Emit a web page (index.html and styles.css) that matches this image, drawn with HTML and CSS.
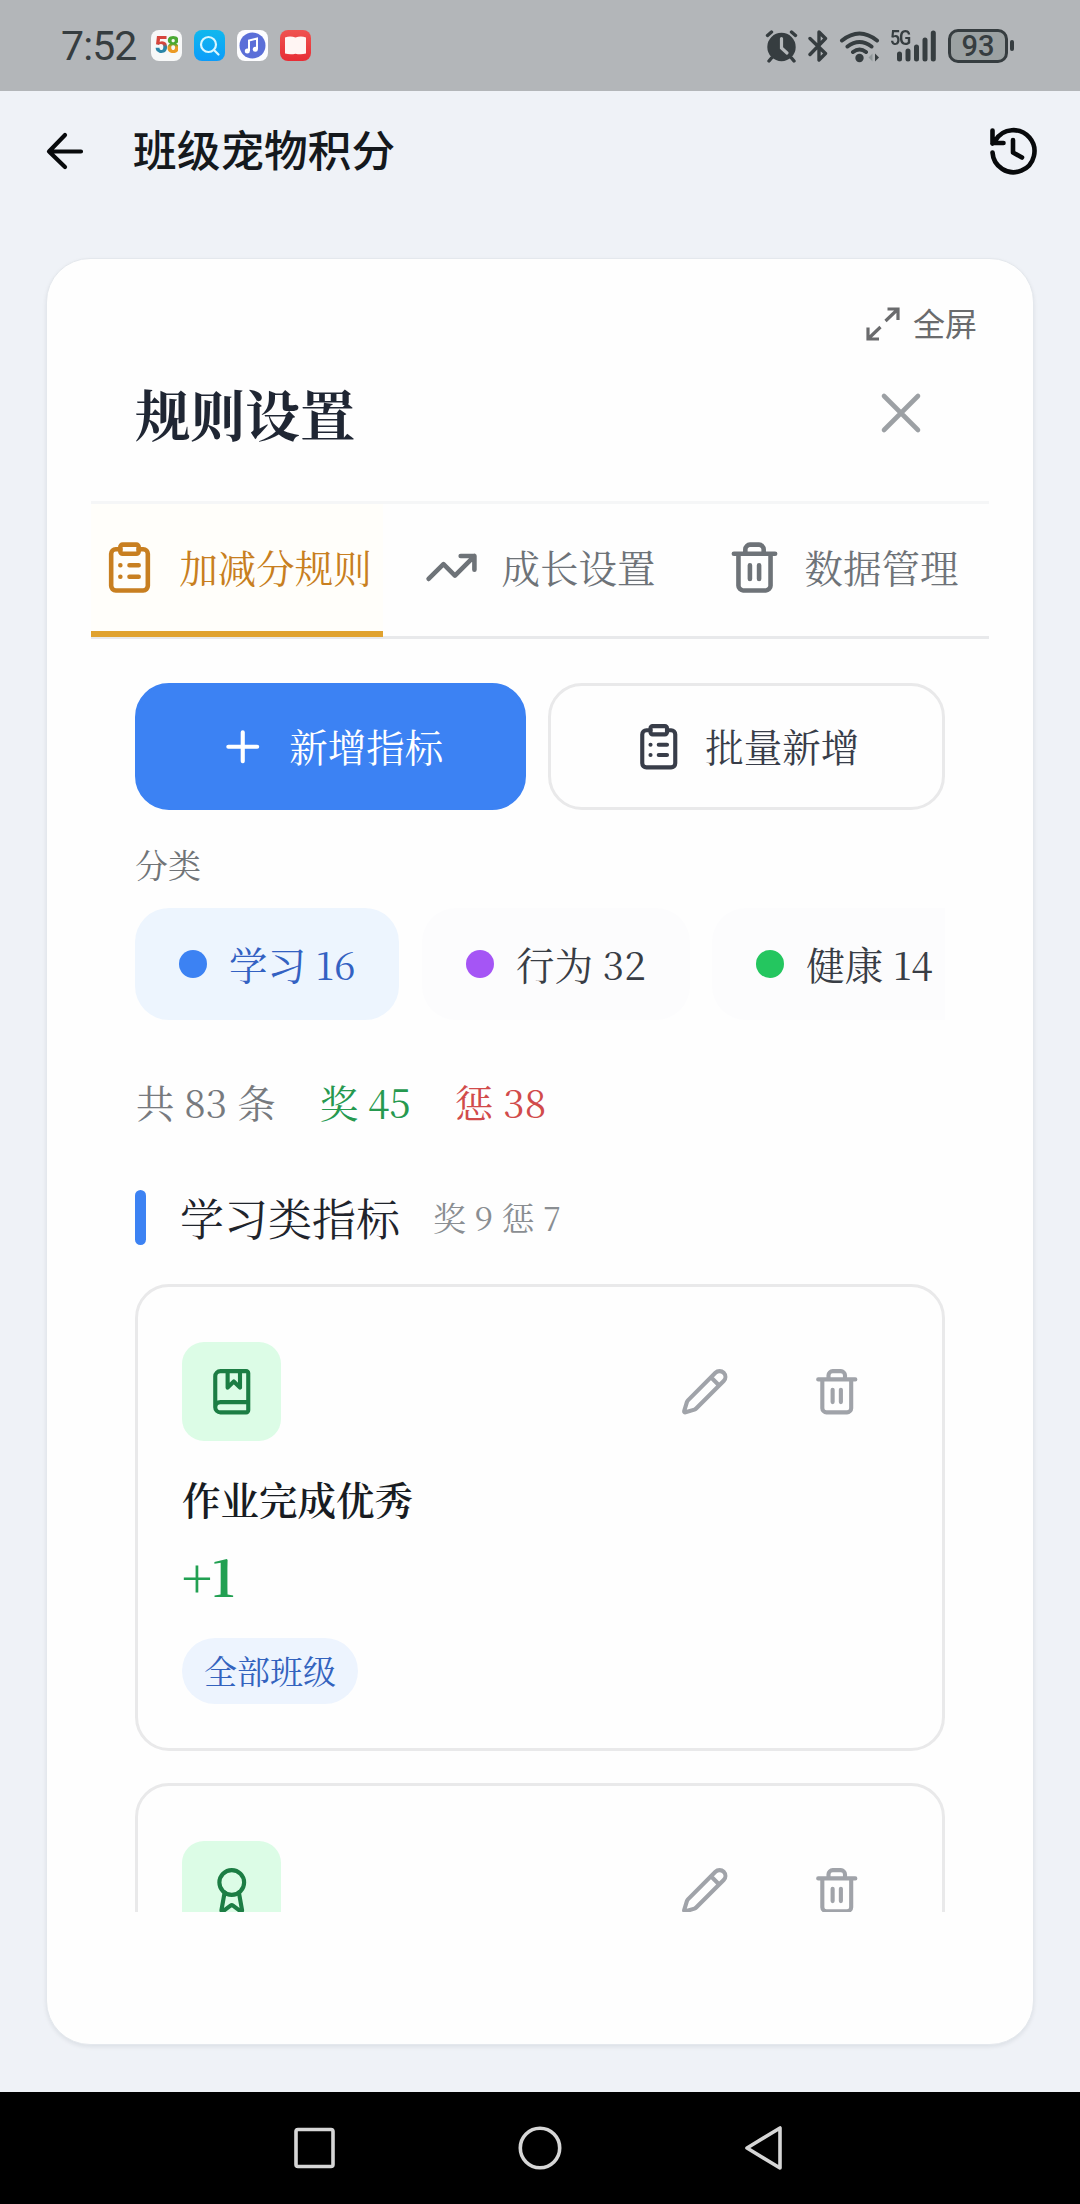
FILE: index.html
```html
<!DOCTYPE html>
<html lang="zh-CN">
<head>
<meta charset="utf-8">
<title>班级宠物积分</title>
<link rel="stylesheet" href="styles.css">
</head>
<body>
<svg class="defs" width="0" height="0" aria-hidden="true">
  <symbol id="i-clipboard" viewBox="0 0 24 24"><rect x="8" y="2" width="8" height="4" rx="1"/><path d="M16 4h2a2 2 0 0 1 2 2v14a2 2 0 0 1-2 2H6a2 2 0 0 1-2-2V6a2 2 0 0 1 2-2h2M12 11h4M12 16h4M8 11h.01M8 16h.01"/></symbol>
  <symbol id="i-trend" viewBox="0 0 24 24"><path d="M22 7l-8.5 8.500-5-5L2 17M16 7h6v6"/></symbol>
  <symbol id="i-trash" viewBox="0 0 24 24"><path d="M3 6h18M19 6v14c0 1-1 2-2 2H7c-1 0-2-1-2-2V6M8 6V4c0-1 1-2 2-2h4c1 0 2 1 2 2v2M10 11v6M14 11v6"/></symbol>
  <symbol id="i-pencil" viewBox="0 0 24 24"><path d="M21.174 6.812a1 1 0 0 0-3.986-3.987L3.842 16.174a2 2 0 0 0-.5.83l-1.321 4.352a.5.5 0 0 0 .623.622l4.353-1.320a2 2 0 0 0 .83-.497zM15 5l4 4"/></symbol>
  <symbol id="i-plus" viewBox="0 0 24 24"><path d="M5 12h14M12 5v14"/></symbol>
  <symbol id="i-book" viewBox="0 0 24 24"><path d="M10 2v8l3-3 3 3V2M4 19.500v-15A2.500 2.500 0 0 1 6.500 2H19a1 1 0 0 1 1 1v18a1 1 0 0 1-1 1H6.500a1 1 0 0 1 0-5H20"/></symbol>
  <symbol id="i-award" viewBox="0 0 24 24"><circle cx="12" cy="8" r="6"/><path d="m15.477 12.890 1.515 8.526a.5.5 0 0 1-.81.47l-3.580-2.687a1 1 0 0 0-1.197 0l-3.586 2.686a.5.5 0 0 1-.81-.469l1.514-8.526"/></symbol>
</svg>

<header class="status">
  <div class="status-left">
    <span class="clock">7:52</span>
    <span class="app app-58"><b class="c5">5</b><b class="c8">8</b></span>
    <span class="app app-search"><svg viewBox="0 0 31 31" width="31" height="31"><circle cx="14.500" cy="14.500" r="7.500"/><path d="M20 20l4.500 4.500"/></svg></span>
    <span class="app app-music"><svg viewBox="0 0 31 31" width="31" height="31"><circle cx="15.500" cy="15.500" r="13" fill="#5b6fd8"/><path d="M12 21V10.500l8-2V19" fill="none" stroke="#fff" stroke-width="2"/><circle cx="10.300" cy="21" r="2.500" fill="#fff"/><circle cx="18.300" cy="19.300" r="2.500" fill="#fff"/></svg></span>
    <span class="app app-red"><svg viewBox="0 0 31 31" width="31" height="31"><path d="M5 7.500q5.200-2 10.500 0 5.300-2 10.500 0v16q-5 1.500-10.500.3-5.500 1.200-10.500-.3z" fill="#fff5f3"/></svg></span>
  </div>
  <div class="status-right">
    <svg class="alarm" width="33" height="34" viewBox="0 0 33 34"><circle cx="16.500" cy="18" r="14.200" fill="#363d40"/><path d="M2.500 6.500L6.500 3M30.500 6.500L26.500 3M6.500 29l-2.500 3M26.500 29l2.500 3" stroke="#363d40" stroke-width="3.400" stroke-linecap="round"/><path d="M16.500 9.500V19l5.500 5" stroke="#b4b8ba" stroke-width="3.200" fill="none" stroke-linecap="round"/></svg>
    <svg class="bt" width="20" height="34" viewBox="0 0 20 34" fill="none" stroke="#363d40" stroke-width="3.400" stroke-linejoin="round" stroke-linecap="round"><path d="M2 9.500l15.500 15L11 31V3l6.500 6.500L2 25.500"/></svg>
    <svg class="wifi" width="42" height="34" viewBox="0 0 42 34" fill="none" stroke="#363d40" stroke-width="4" stroke-linecap="round"><path d="M3 11.500q17.500-14 35 0M8.500 17.500q12-9 24 0M14 23q6.500-5 13 0"/><circle cx="20.500" cy="29" r="4.200" fill="#363d40" stroke="none"/><path d="M36 24.500v8l4-4z" fill="#363d40" stroke="none"/><path d="M33.500 24.500v8l-4-4z" fill="#90979a" stroke="none"/></svg>
    <span class="net"><i class="g5">5G</i><svg width="46" height="34" viewBox="0 0 46 34" stroke="#363d40" stroke-width="5" stroke-linecap="round"><path d="M9.500 25v5M18 22v8M26.500 18v12M35 11v19M43.300 4v26"/></svg></span>
    <span class="battery">93</span><span class="nub"></span>
  </div>
</header>

<div class="appbar">
  <svg class="back" width="40" height="40" viewBox="0 0 40 40"><path d="M36 20.500H4M20 4L4 20.500 20 36"/></svg>
  <h1 class="app-title">班级宠物积分</h1>
  <svg class="history" width="50" height="50" viewBox="0 0 50 50"><path d="M4.500 26.500a21 21 0 1 0 3-12.200L4.500 17.500M4.500 4.500V17h11M25 14v12.500l9 5"/></svg>
</div>

<main class="panel">
  <div class="fullscreen"><svg width="34" height="34" viewBox="0 0 34 34"><path d="M19.500 14L31.500 2.500M21.500 2h10.500v11M14.500 20L2.500 31.500M2 20.500V32h11"/></svg><span>全屏</span></div>
  <section class="dialog">
    <div class="dialog-head">
      <h2>规则设置</h2>
      <svg class="close" width="42" height="42" viewBox="0 0 42 42"><path d="M4 4l34 34M38 4L4 38"/></svg>
    </div>
    <nav class="tabs">
      <div class="tab active"><svg class="icon i20"><use href="#i-clipboard"/></svg><span>加减分规则</span></div>
      <div class="tab"><svg class="icon i20"><use href="#i-trend"/></svg><span>成长设置</span></div>
      <div class="tab"><svg class="icon i20"><use href="#i-trash"/></svg><span>数据管理</span></div>
    </nav>
    <div class="scroll">
      <div class="actions">
        <div class="btn primary"><svg class="icon i18"><use href="#i-plus"/></svg><span>新增指标</span></div>
        <div class="btn"><svg class="icon i18"><use href="#i-clipboard"/></svg><span>批量新增</span></div>
      </div>
      <div class="label">分类</div>
      <div class="chips">
        <div class="chip on"><i class="dot blue"></i><span>学习 16</span></div>
        <div class="chip"><i class="dot purple"></i><span>行为 32</span></div>
        <div class="chip"><i class="dot green"></i><span>健康 14</span></div>
      </div>
      <div class="stats"><span>共 83 条</span><span class="good">奖 45</span><span class="bad">惩 38</span></div>
      <div class="group"><i class="bar"></i><h3>学习类指标</h3><span class="sub">奖 9 惩 7</span></div>
      <article class="rule">
        <div class="rule-top">
          <span class="tile"><svg class="icon i18"><use href="#i-book"/></svg></span>
          <div class="ops"><span class="op"><svg class="icon i18"><use href="#i-pencil"/></svg></span><span class="op"><svg class="icon i18"><use href="#i-trash"/></svg></span></div>
        </div>
        <div class="name">作业完成优秀</div>
        <div class="points">+1</div>
        <div class="pill">全部班级</div>
      </article>
      <article class="rule">
        <div class="rule-top">
          <span class="tile"><svg class="icon i18"><use href="#i-award"/></svg></span>
          <div class="ops"><span class="op"><svg class="icon i18"><use href="#i-pencil"/></svg></span><span class="op"><svg class="icon i18"><use href="#i-trash"/></svg></span></div>
        </div>
      </article>
    </div>
  </section>
</main>

<footer class="navbar">
  <svg width="44" height="48" viewBox="0 0 44 48"><rect x="3" y="5.500" width="37" height="37" rx="2"/></svg>
  <svg width="48" height="48" viewBox="0 0 48 48"><circle cx="24" cy="24" r="19.700"/></svg>
  <svg width="44" height="48" viewBox="0 0 44 48"><path d="M37 4v40L4 24z"/></svg>
</footer>
</body>
</html>
```
FILE: styles.css
```css
* { box-sizing: border-box; }
body {
  margin: 0;
  width: 1080px;
  height: 2204px;
  display: flex;
  flex-direction: column;
  overflow: hidden;
  background: #eff2f7;
  font-family: "Noto Sans CJK SC", sans-serif;
}
.defs { position: absolute; }
h1, h2, h3 { margin: 0; }
i { font-style: normal; }
svg { display: block; flex: none; }

/* status bar */
.status {
  height: 91px;
  flex: none;
  display: flex;
  justify-content: space-between;
  padding: 0 66px 0 61px;
  background: #b3b6b9;
  color: #363d40;
}
.status-left, .status-right { display: flex; align-items: center; }
.clock { width: 90px; font: 400 41px/92px Roboto, sans-serif; letter-spacing: -0.9px; }
.app {
  width: 31px;
  height: 31px;
  margin-right: 12px;
  border-radius: 8px;
  display: flex;
  align-items: center;
  justify-content: center;
  overflow: hidden;
}
.app-58 { background: #f7f8f8; font: 700 23px/31px Roboto, sans-serif; letter-spacing: -1.5px; }
.c5 { background: linear-gradient(#d6453c 45%, #2a86a8 55%); -webkit-background-clip: text; color: transparent; }
.c8 { background: linear-gradient(#4aa832 45%, #eb9a24 55%); -webkit-background-clip: text; color: transparent; }
.app-search { background: linear-gradient(#10b8ee, #0c9cfa); }
.app-search svg { fill: none; stroke: #d8f6ff; stroke-width: 2.2; stroke-linecap: round; }
.app-music { background: #fdfdff; }
.app-red { background: linear-gradient(#ef5350, #e72d35); }
.alarm { margin-right: 10px; }
.bt { margin-right: 11px; }
.wifi { margin-right: 9px; }
.net { position: relative; height: 34px; margin-right: 12px; }
.g5 { position: absolute; left: 0; top: 1px; font: 600 20px/17px Roboto, sans-serif; letter-spacing: -1.5px; transform: scaleX(.9); transform-origin: 0 0; }
.battery {
  width: 60px;
  height: 34px;
  border: 3px solid #363d40;
  border-radius: 10px;
  background: #9ba1a2;
  text-align: center;
  font: 500 29px/29px Roboto, sans-serif;
}
.nub { width: 4px; height: 11px; margin-left: 2px; border-radius: 2px; background: #363d40; }

/* app bar */
.appbar { height: 167px; flex: none; display: flex; align-items: flex-start; padding: 34px 42px 0 46px; }
.back { margin: 6px 0 0 -1px; fill: none; stroke: #080a0c; stroke-width: 4.2; stroke-linecap: round; stroke-linejoin: round; }
.app-title { flex: 1; margin: -3px 0 0 48px; font-size: 43.7px; line-height: 52px; font-weight: 500; color: #15191d; }
.history { margin-top: 1px; fill: none; stroke: #080a0c; stroke-width: 4.6; stroke-linecap: round; stroke-linejoin: round; }

/* panel */
.panel {
  height: 1787px;
  flex: none;
  margin: 0 46px;
  padding: 45px 44px;
  border: 1px solid #e4e8ed;
  border-radius: 44px;
  background: #fefefe;
  box-shadow: 0 2px 4px rgba(15, 23, 42, .08);
}
.fullscreen { display: flex; justify-content: flex-end; align-items: center; gap: 13px; height: 40px; padding-right: 12px; font-size: 32px; line-height: 36px; color: #6a6b6d; }
.fullscreen span { padding-bottom: 4px; }
.fullscreen svg { fill: none; stroke: #6a6b6d; stroke-width: 3.2; }
.dialog { font-family: "Noto Serif CJK SC", "Source Han Serif SC", "Noto Serif SC", "Noto Sans CJK SC", serif; }
.dialog-head { height: 160px; display: flex; justify-content: space-between; padding: 28px 67px 0 44px; border-bottom: 3px solid #f5f6f7; }
.dialog-head h2 { font-size: 55px; line-height: 81px; font-weight: 700; color: #1f2633; }
.close { margin-top: 20px; stroke: #9ca0a4; stroke-width: 4.6; stroke-linecap: round; }
.tabs { display: grid; grid-template-columns: 292px 1fr 292px; height: 135px; border-bottom: 3px solid #e8e9eb; }
.tab { display: flex; align-items: center; justify-content: center; gap: 22px; height: 133px; padding-bottom: 6px; font-size: 38.5px; color: #6e7378; white-space: nowrap; }
.tab.active { background: #fffefa; color: #c87f20; border-bottom: 6px solid #e0a22f; padding-bottom: 0; }
.tab span, .btn span { padding-bottom: 3px; }
.icon { fill: none; stroke: currentColor; stroke-width: 2; stroke-linecap: round; stroke-linejoin: round; }
.i20 { width: 55px; height: 55px; }
.i18 { width: 49.5px; height: 49.5px; }

.scroll { height: 1273px; margin: 0 44px; padding-top: 44px; overflow: hidden; }
.actions { display: grid; grid-template-columns: 391px 397px; gap: 22px; }
.btn { height: 127px; display: flex; align-items: center; justify-content: center; gap: 22px; border: 3px solid #e9e9ea; border-radius: 34px; font-size: 38.5px; color: #383d49; }
.btn.primary { background: #3c82f3; border-color: #3c82f3; color: #fff; }
.label { margin-top: 32px; font-size: 33px; line-height: 44px; color: #707477; }
.chips { display: flex; gap: 22.5px; margin-top: 22px; overflow: hidden; }
.chip { flex: none; height: 112px; display: flex; align-items: center; gap: 22px; padding: 0 44px; border-radius: 34px; background: #fcfcfd; font-size: 38.5px; color: #383d45; white-space: nowrap; }
.chip span { padding-bottom: 2px; }
.chip.on { background: #edf5fe; color: #3361c2; }
.dot { width: 28px; height: 28px; border-radius: 50%; }
.blue { background: #3c82f3; }
.purple { background: #a555f5; }
.green { background: #24c65f; }
.stats { display: flex; gap: 44px; margin-top: 54px; padding-left: 1px; font-size: 38.5px; line-height: 56px; color: #777a7e; }
.good { color: #26994f; }
.bad { color: #d14b4b; }
.group { display: flex; align-items: center; height: 55px; margin-top: 60px; }
.bar { width: 11px; height: 55px; border-radius: 6px; background: #3c82f3; }
.group h3 { margin-left: 34px; font-size: 44px; line-height: 55px; font-weight: 400; color: #1f242c; }
.sub { margin-left: 33px; padding-bottom: 2px; font-size: 33px; line-height: 50px; color: #8a8e92; }

.rule { height: 467px; margin-top: 32px; padding: 55px 50px 0 44px; border: 3px solid #e9e9ea; border-radius: 34px; }
.group + .rule { margin-top: 39px; }
.rule-top { display: flex; justify-content: space-between; align-items: center; }
.tile { width: 99px; height: 99px; display: flex; align-items: center; justify-content: center; border-radius: 22px; background: #dcfce6; color: #1c7d44; }
.ops { display: flex; gap: 22px; color: #a0a3a9; }
.op { width: 110px; height: 110px; margin: -6px 0; display: flex; align-items: center; justify-content: center; }
.name { margin-top: 30px; font-size: 38.5px; line-height: 56px; font-weight: 600; color: #181c22; }
.points { margin-top: 16px; font-size: 49.5px; line-height: 66px; font-weight: 700; color: #22a052; }
.pill { width: fit-content; height: 66px; margin-top: 29px; padding: 0 22px; border-radius: 33px; background: #edf4fe; font-size: 33px; line-height: 63px; color: #3363be; }

/* system navigation */
.navbar { height: 112px; margin-top: 47px; flex: none; display: flex; justify-content: center; align-items: flex-start; gap: 179px; padding-top: 32px; background: #000; }
.navbar svg { fill: none; stroke: #d6d6d6; stroke-width: 3.6; stroke-linejoin: round; }
```
